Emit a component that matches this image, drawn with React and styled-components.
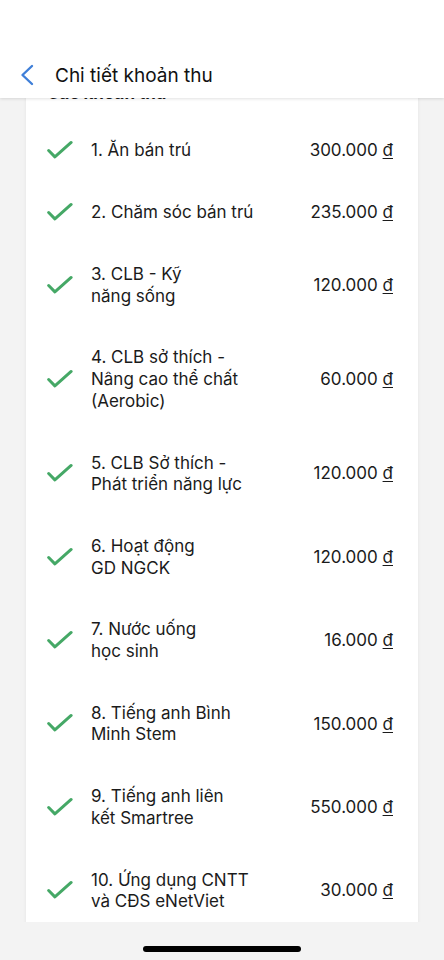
import React from 'react'
import styled, { createGlobalStyle } from 'styled-components'

const fees = [
  { name: '1. Ăn bán trú', amount: '300.000' },
  { name: '2. Chăm sóc bán trú', amount: '235.000' },
  { name: '3. CLB - Kỹ\nnăng sống', amount: '120.000' },
  { name: '4. CLB sở thích -\nNâng cao thể chất\n(Aerobic)', amount: '60.000' },
  { name: '5. CLB Sở thích -\nPhát triển năng lực', amount: '120.000' },
  { name: '6. Hoạt động\nGD NGCK', amount: '120.000' },
  { name: '7. Nước uống\nhọc sinh', amount: '16.000' },
  { name: '8. Tiếng anh Bình\nMinh Stem', amount: '150.000' },
  { name: '9. Tiếng anh liên\nkết Smartree', amount: '550.000' },
  { name: '10. Ứng dụng CNTT\nvà CĐS eNetViet', amount: '30.000' }
]

const CheckIcon = () => (
  <svg width="28" height="22" viewBox="0 0 28 22" fill="none">
    <path d="M1.8 10.5 L8.5 17.3 L26 1.8" stroke="#45a866" strokeWidth="3.2" strokeLinecap="round" strokeLinejoin="round" />
  </svg>
)

const BackIcon = () => (
  <svg width="16" height="22" viewBox="0 0 16 22" fill="none">
    <path d="M12 2 L2.5 11 L12 20" stroke="#3f7fd8" strokeWidth="2.4" strokeLinecap="round" strokeLinejoin="round" />
  </svg>
)

const App = () => {
  return (
    <>
      <GlobalStyle />
      <Screen>
        <Header>
          <BackButton><BackIcon /></BackButton>
          <Title>Chi tiết khoản thu</Title>
        </Header>

        <Content>
          <Card>
            <CardTitle>Các khoản thu</CardTitle>
            {fees.map(fee => (
              <FeeRow key={fee.name}>
                <CheckBox><CheckIcon /></CheckBox>
                <FeeName>{fee.name}</FeeName>
                <Amount>{fee.amount} <Dong>đ</Dong></Amount>
              </FeeRow>
            ))}
          </Card>
        </Content>

        <HomeBar />
      </Screen>
    </>
  )
}

export default App

const GlobalStyle = createGlobalStyle`
  body {
    margin: 0;
    background: #f3f3f3;
    font-family: Inter, "Noto Sans", sans-serif;
    color: #1b1b1b;
  }
`

const Screen = styled.div`
  position: relative;
  width: 444px;
  height: 960px;
  overflow: hidden;
  background: #f3f3f3;
`

const Header = styled.header`
  position: absolute;
  z-index: 2;
  top: 0;
  left: 0;
  right: 0;
  height: 98px;
  box-sizing: border-box;
  padding: 52px 0 0 20px;
  display: flex;
  align-items: center;
  gap: 19px;
  background: #fff;
  box-shadow: 0 1px 3px rgba(0, 0, 0, 0.12);
`

const BackButton = styled.div`
  display: flex;
  align-items: center;
`

const Title = styled.h1`
  margin: 0;
  font-size: 19px;
  font-weight: 400;
  color: #111;
`

const Content = styled.main`
  height: 922px;
  box-sizing: border-box;
  overflow: hidden;
  padding: 66px 26px 0;
`

const Card = styled.section`
  background: #fff;
  box-shadow: 0 0 4px rgba(0, 0, 0, 0.06);
  padding: 0 25px 0 21px;
`

const CardTitle = styled.h2`
  margin: 0;
  padding: 12px 0 12px;
  font-size: 17px;
  font-weight: 700;
  line-height: 30px;
`

const FeeRow = styled.div`
  display: flex;
  align-items: center;
  padding: 20px 0;
`

const CheckBox = styled.div`
  display: flex;
  width: 26px;
  margin-right: 18px;
`

const FeeName = styled.div`
  flex: 1;
  white-space: pre-line;
  font-size: 17px;
  line-height: 21.7px;
`

const Amount = styled.div`
  font-size: 17px;
  line-height: 21.7px;
  white-space: nowrap;
`

const Dong = styled.span`
  text-decoration: underline;
  text-underline-offset: 2px;
`

const HomeBar = styled.div`
  position: absolute;
  left: 143px;
  bottom: 8px;
  width: 158px;
  height: 6px;
  border-radius: 3px;
  background: #000;
`
